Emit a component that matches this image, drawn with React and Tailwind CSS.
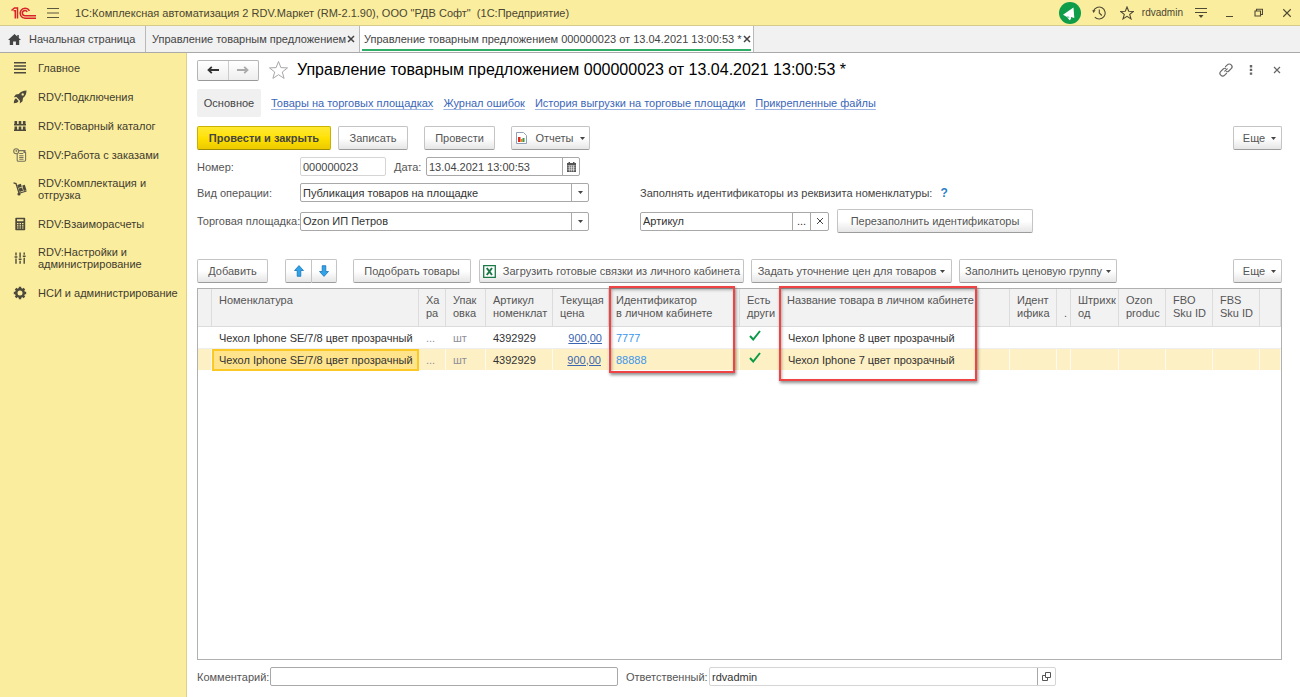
import { clsx } from "clsx";

const MENU = [
  { icon: "main", label: "Главное" },
  { icon: "rocket", label: "RDV:Подключения" },
  { icon: "grid", label: "RDV:Товарный каталог" },
  { icon: "orders", label: "RDV:Работа с заказами" },
  { icon: "cart", label: "RDV:Комплектация и отгрузка", tall: true },
  { icon: "calc", label: "RDV:Взаиморасчеты" },
  { icon: "sliders", label: "RDV:Настройки и администрирование", tall: true },
  { icon: "gear", label: "НСИ и администрирование" },
];

const LINKS = [
  "Товары на торговых площадках",
  "Журнал ошибок",
  "История выгрузки на торговые площадки",
  "Прикрепленные файлы",
];

// the product name column has no width and takes the rest of the table
const COLUMNS = [
  { key: "mark", lines: [], width: "w-[14px]" },
  { key: "item", lines: ["Номенклатура"], width: "w-[207px]" },
  { key: "feature", lines: ["Ха", "ра"], width: "w-[27px]" },
  { key: "pack", lines: ["Упак", "овка"], width: "w-[40px]" },
  { key: "sku", lines: ["Артикул", "номенклат"], width: "w-[67px]" },
  { key: "price", lines: ["Текущая", "цена"], width: "w-[56px]" },
  { key: "extId", lines: ["Идентификатор", "в личном кабинете"], width: "w-[131px]", frame: "h-[87px] left-0 right-1" },
  { key: "other", lines: ["Есть", "други"], width: "w-[41px]" },
  { key: "extName", lines: ["Название товара в личном кабинете"], width: "", frame: "h-[95px] -left-0.5 -right-0.5" },
  { key: "gap", lines: [], width: "w-[34px]" },
  { key: "ident", lines: ["Идент", "ифика"], width: "w-[47px]" },
  { key: "dot", lines: ["\u00a0", "."], width: "w-[14px]" },
  { key: "barcode", lines: ["Штрихк", "од"], width: "w-[48px]" },
  { key: "ozon", lines: ["Ozon", "produc"], width: "w-[47px]" },
  { key: "fbo", lines: ["FBO", "Sku ID"], width: "w-[47px]" },
  { key: "fbs", lines: ["FBS", "Sku ID"], width: "w-[47px]" },
  { key: "tail", lines: [], width: "w-[21px]" },
];

const ROWS = [
  { item: "Чехол Iphone SE/7/8 цвет прозрачный", feature: "...", pack: "шт", sku: "4392929", price: "900,00", extId: "7777", extName: "Чехол Iphone 8 цвет прозрачный" },
  { item: "Чехол Iphone SE/7/8 цвет прозрачный", feature: "...", pack: "шт", sku: "4392929", price: "900,00", extId: "88888", extName: "Чехол Iphone 7 цвет прозрачный", selected: true },
];

function MenuIcon({ name }) {
  return (
    <svg width="14" height="14" viewBox="0 0 14 14" fill="#4d4a3c" stroke="none" className="shrink-0" aria-hidden="true">
      {name === "main" && <path d="M1 1h12v1.500H1zM1 4.300h12v1.500H1zM1 7.600h12v1.500H1zM1 10.900h12v1.500H1z" />}
      {name === "rocket" && (
        <path fillRule="evenodd" d="M13.5.5C10 .6 7.600 1.700 5.800 4L2.800 4.500.8 7.300l2.700-.2L7 10.700l-.2 2.800 2.700-2.200.5-3.200c2.500-1.900 3.500-4.200 3.500-7.600zM9.700 3.200a1.200 1.200 0 1 1 0 2.400 1.200 1.200 0 0 1 0-2.400zM3 8.300C1.600 9 1 10.500.8 13.200c2.500-.2 4-.8 4.700-2.300z" />
      )}
      {name === "grid" && (
        <path d="M1.500 2h2.600v3H1.500zM5.700 2h2.600v3H5.700zM9.900 2h2.600v3H9.900zM1.500 7.500h2.600v3H1.500zM5.700 7.500h2.600v3H5.700zM9.900 7.500h2.600v3H9.900zM1 5h12v1.500H1zM1 10.500h12V12H1z" />
      )}
      {name === "orders" && (
        <g fill="none" stroke="#77735c" strokeWidth="1.100">
          <circle cx="3.200" cy="3.200" r="2.500" />
          <path d="M3.200 1.800v1.500h1M6 2.600h6v2M4.200 6v6.200c0 .7.400 1 1 1h6.200c.8 0 1.200-.5 1.200-1.200V4.500H11V3M6.200 5.500h4M6.200 7.700h4.300M6.200 9.500h4.300M6.200 11.300h4.300" />
        </g>
      )}
      {name === "cart" && (
        <g>
          <path d="M.5.800 3 1.500l3 9.500M5.500 11.500 13.500 9" fill="none" stroke="#4d4a3c" strokeWidth="1.300" />
          <path d="m4.300 3 3.600-1.200.9 3-3.600 1.100zM5.500 6.500l3.600-1.100 1 3.400-3.500 1.100zM9.300 3.500l2.500-.8 1.700 5.500-2.800.9z" />
          <circle cx="6" cy="12" r="1.600" />
        </g>
      )}
      {name === "calc" && (
        <path fillRule="evenodd" d="M3 .800h8.500c.4 0 .7.300.7.700v11c0 .4-.3.700-.7.700H3c-.4 0-.7-.3-.7-.7v-11c0-.4.300-.7.700-.7zM4 2.300v2h6.500v-2zM4 6v1.200h1.500V6zM6.500 6v1.200H8V6zM9 6v1.200h1.500V6zM4 8.200v1.200h1.500V8.200zM6.500 8.200v1.200H8V8.200zM9 8.200v1.200h1.500V8.200zM4 10.400v1.200h1.500v-1.200zM6.500 10.400v1.200H8v-1.200zM9 10.400v1.200h1.500v-1.200z" />
      )}
      {name === "sliders" && (
        <path d="M2.300 1.500h1.400v3H2.300zM1.600 5.200h2.800v1.600H1.600zM2.300 7.500h1.400v5.300H2.300zM6.400 1.500h1.400v5.300H6.400zM5.700 7.500h2.800v1.600H5.700zM6.400 9.800h1.400v3H6.400zM10.500 1.500h1.400v2.300h-1.400zM9.800 4.500h2.800v1.600H9.800zM10.500 6.800h1.400v6h-1.400z" />
      )}
      {name === "gear" && (
        <g>
          <circle cx="7" cy="7" r="3.700" fill="none" stroke="#4d4a3c" strokeWidth="2.600" />
          <path d="M7 .800v12.400M.8 7h12.400M2.600 2.600l8.800 8.800M11.400 2.600l-8.800 8.800" stroke="#4d4a3c" strokeWidth="2.400" fill="none" />
          <circle cx="7" cy="7" r="2.500" fill="#fbed9e" />
        </g>
      )}
    </svg>
  );
}

function Caret() {
  return (
    <svg width="5" height="3" viewBox="0 0 5 3" fill="#444" className="shrink-0" aria-hidden="true">
      <path d="M0 0h5L2.500 3z" />
    </svg>
  );
}

function Cross({ size = 8, color = "#444", weight = 1.5 }) {
  return (
    <svg width={size} height={size} viewBox="0 0 8 8" fill="none" stroke={color} strokeWidth={weight} aria-hidden="true">
      <path d="m1 1 6 6M7 1 1 7" />
    </svg>
  );
}

function Btn({ primary, className, children, ...rest }) {
  return (
    <button
      type="button"
      className={clsx(
        "flex h-6 shrink-0 items-center justify-center whitespace-nowrap rounded-[2px] border bg-linear-to-b",
        primary
          ? "border-[#c9b100] border-b-[#a08c00] from-[#ffe92e] via-[#ffe100] to-[#ecca00] font-bold text-[#444]"
          : "border-[#c4c4c4] border-b-[#9c9c9c] from-white via-white to-[#e6e6e6] text-[#555]",
        className
      )}
      {...rest}
    >
      {children}
    </button>
  );
}

function Select({ id, value }) {
  return (
    <div className="relative flex h-[19px] w-[289px] rounded-[2px] border border-[#a8a8a8] bg-white">
      <select id={id} defaultValue={value} className="w-full appearance-none bg-transparent pl-0.5 pr-5 text-[#333] outline-none">
        <option>{value}</option>
      </select>
      <span className="pointer-events-none absolute inset-y-0 right-0 flex w-[17px] items-center justify-center border-l border-[#a8a8a8]">
        <Caret />
      </span>
    </div>
  );
}

function TitleBar() {
  return (
    <header className="flex h-[26px] items-center border-b border-[#d6ca8a] bg-[#fbed9e] pl-[11px] pr-2">
      <svg width="26" height="14" viewBox="0 0 26 14" fill="none" stroke="#d8232a" strokeWidth="1.500" aria-label="1С">
        <path d="M.5 4.500 3.500 2h3v10.500M4.300 12.500V4.700H2.500" />
        <path d="M18.500 4.800A5 5 0 1 0 14 12.200h11M16.200 5.800a2.600 2.600 0 1 0-2 3.900H25" />
      </svg>
      <button type="button" aria-label="Меню" className="ml-[9px]">
        <svg width="14" height="12" viewBox="0 0 14 12" stroke="#5c573f" strokeWidth="1.200" aria-hidden="true">
          <path d="M1 1.500h12M1 6h12M1 10.500h12" />
        </svg>
      </button>
      <span className="ml-[15px] whitespace-pre text-[#4a4631]">
        {'1С:Комплексная автоматизация 2 RDV.Маркет (RM-2.1.90), ООО "РДВ Софт"  (1С:Предприятие)'}
      </span>
      <div className="ml-auto flex items-center text-[#4a4631]">
        <button type="button" aria-label="Уведомления">
          <svg width="22" height="22" viewBox="0 0 22 22" aria-hidden="true">
            <circle cx="11" cy="11" r="11" fill="#0f9d4a" />
            <path d="M4 12.700 14.500 5.500l.8 10.500-3.300-.9c.3 1.500-.2 2.700-1.500 3.200L8 15z" fill="#fff" />
            <path d="m8.300 14.800 1.900.600" stroke="#0f9d4a" strokeWidth=".8" />
          </svg>
        </button>
        <button type="button" aria-label="История" className="ml-[11px]">
          <svg width="14" height="14" viewBox="0 0 14 14" fill="none" stroke="#4f4a35" strokeWidth="1.100" aria-hidden="true">
            <path d="M1.500 5A6 6 0 1 1 2.800 11.200M7.300 3.500V7l2.500 2.500" />
            <path d="M.2 4.200h3.400L1.600 7z" fill="#4f4a35" stroke="none" />
          </svg>
        </button>
        <button type="button" aria-label="Избранное" className="ml-[14px]">
          <svg width="14" height="14" viewBox="0 0 14 14" fill="none" stroke="#4f4a35" strokeWidth="1.100" aria-hidden="true">
            <path d="m7 1 1.700 4.300 4.600.200-3.600 2.900 1.300 4.500L7 10.400l-4 2.500 1.300-4.500L.7 5.500l4.600-.2z" />
          </svg>
        </button>
        <span className="ml-2 text-[10px]">rdvadmin</span>
        <button type="button" aria-label="Настройки" className="ml-[11px]">
          <svg width="14" height="13" viewBox="0 0 14 13" fill="none" stroke="#4f4a35" strokeWidth="1.200" aria-hidden="true">
            <path d="M1 2.500h12M1 6.500h12" />
            <path d="M4.500 9h5L7 12z" fill="#4f4a35" stroke="none" />
          </svg>
        </button>
        <button type="button" aria-label="Свернуть" className="ml-[17px]">
          <svg width="10" height="10" viewBox="0 0 10 10" stroke="#4f4a35" strokeWidth="1" aria-hidden="true">
            <path d="M1 8.500h7" />
          </svg>
        </button>
        <button type="button" aria-label="Развернуть" className="ml-[19px]">
          <svg width="9" height="9" viewBox="0 0 9 9" fill="none" stroke="#4f4a35" strokeWidth="1.100" aria-hidden="true">
            <path d="M1 3h5.500v5H1zM2.500 3V1.200h6v5.300h-2" />
          </svg>
        </button>
        <button type="button" aria-label="Закрыть" className="ml-[19px]">
          <Cross size={10} color="#4f4a35" weight={0.9} />
        </button>
      </div>
    </header>
  );
}

function PageTabs() {
  return (
    <nav className="flex h-[27px] border-b border-[#a9a9a9] bg-[#f1f1f1] text-[#444]">
      <a href="#home" className="flex w-[146px] items-center border-r border-[#b9b9b9] pl-2">
        <svg width="13" height="11" viewBox="0 0 13 11" fill="#444" className="shrink-0" aria-hidden="true">
          <path d="M6.500 0 0 6h1.800v5h3.300V7.500h2.800V11h3.300V6H13L10.800 4V1H9.300v1.600z" />
        </svg>
        <span className="ml-2 whitespace-nowrap">Начальная страница</span>
      </a>
      <div className="flex w-[214px] items-center border-r border-[#b9b9b9] pl-1.5">
        <a href="#list" className="whitespace-nowrap">Управление товарным предложением</a>
        <button type="button" aria-label="Закрыть вкладку" className="ml-auto mr-1"><Cross /></button>
      </div>
      <div className="flex w-[394px] border-r border-[#b9b9b9] bg-white px-0.5">
        <div className="flex h-[25px] flex-1 items-center border-b-2 border-[#2fac66] pl-0.5 pt-0.5">
          <a href="#doc" className="whitespace-nowrap">Управление товарным предложением 000000023 от 13.04.2021 13:00:53 *</a>
          <button type="button" aria-label="Закрыть вкладку" className="ml-auto"><Cross /></button>
        </div>
      </div>
    </nav>
  );
}

function Sidebar() {
  return (
    <aside className="w-[187px] shrink-0 border-r border-[#ddd08c] bg-[#fbed9e]">
      {MENU.map((m) => (
        <a
          key={m.label}
          href="#menu"
          className={clsx("flex items-center pl-[13px] pr-2 leading-3 text-[#3f3c2e]", m.tall ? "h-10" : "h-[29px]")}
        >
          <MenuIcon name={m.icon} />
          <span className="ml-[11px]">{m.label}</span>
        </a>
      ))}
    </aside>
  );
}

function DocHeader() {
  return (
    <div className="flex h-[22px] items-center">
      <div className="flex h-[21px] w-[62px] rounded-[2px] border border-[#b5b5b5] border-b-[#999] bg-linear-to-b from-white to-[#eee]">
        <button type="button" aria-label="Назад" className="flex flex-1 items-center justify-center border-r border-[#ccc]">
          <svg width="12" height="8" viewBox="0 0 12 8" fill="none" stroke="#333" strokeWidth="1.800" aria-hidden="true">
            <path d="M12 4H1.500M4.800.8 1.500 4l3.300 3.200" />
          </svg>
        </button>
        <button type="button" aria-label="Вперед" className="flex flex-1 items-center justify-center">
          <svg width="12" height="8" viewBox="0 0 12 8" fill="none" stroke="#aaa" strokeWidth="1.800" aria-hidden="true">
            <path d="M0 4h10.500M7.200.8 10.500 4 7.200 7.200" />
          </svg>
        </button>
      </div>
      <button type="button" aria-label="В избранное" className="ml-[9px]">
        <svg width="21" height="20" viewBox="0 0 21 20" fill="none" stroke="#a8a8a8" strokeWidth="1" aria-hidden="true">
          <path d="m10.500 1.500 2.400 6.100 6.600.3-5.200 4.100 1.800 6.400-5.600-3.700-5.600 3.700L6.700 12 1.500 7.900l6.600-.3z" />
        </svg>
      </button>
      <h1 className="ml-2 whitespace-nowrap text-base text-black">
        Управление товарным предложением 000000023 от 13.04.2021 13:00:53 *
      </h1>
      <div className="ml-auto flex items-center">
        <button type="button" aria-label="Ссылка">
          <svg width="14" height="14" viewBox="0 0 14 14" fill="none" stroke="#6b6b6b" strokeWidth="1.200" strokeLinecap="round" aria-hidden="true">
            <path d="M6.500 3.600 8.300 1.800a2.700 2.700 0 0 1 3.900 3.900L9.800 8a2.500 2.500 0 0 1-2.300.7M7.500 10.400l-1.800 1.800a2.700 2.700 0 0 1-3.900-3.900L4.200 6a2.500 2.500 0 0 1 2.300-.7M5.800 8.200l2.400-2.400" />
          </svg>
        </button>
        <button type="button" aria-label="Действия" className="ml-4">
          <svg width="4" height="10" viewBox="0 0 4 10" fill="#666" aria-hidden="true">
            <path d="M.8 0h2.400v2.400H.8zM.8 3.700h2.400v2.400H.8zM.8 7.400h2.400v2.400H.8z" />
          </svg>
        </button>
        <button type="button" aria-label="Закрыть" className="ml-5 mr-px">
          <Cross color="#666" weight={1.2} />
        </button>
      </div>
    </div>
  );
}

function Fields() {
  return (
    <div className="mt-[7px] text-[#555]">
      <div className="flex h-[19px] items-center">
        <label htmlFor="number" className="w-[103px]">Номер:</label>
        <input id="number" defaultValue="000000023" className="h-[19px] w-[86px] rounded-[2px] border border-[#d5d5d5] px-0.5 text-[#444] outline-none" />
        <label htmlFor="date" className="ml-2 w-8">Дата:</label>
        <div className="flex h-[19px] w-[154px] rounded-[2px] border border-[#a8a8a8]">
          <input id="date" defaultValue="13.04.2021 13:00:53" className="w-0 flex-1 px-0.5 text-[#444] outline-none" />
          <button type="button" aria-label="Календарь" className="flex w-[17px] items-center justify-center border-l border-[#a8a8a8]">
            <svg width="9" height="10" viewBox="0 0 9 10" aria-hidden="true">
              <path d="M0 1h9v9H0zM1.500 0h1.500v2H1.500zM6 0h1.500v2H6z" fill="#555" />
              <path d="M.5 3.800h8M.5 5.800h8M.5 7.800h8M2.700 3.500v6M4.600 3.500v6M6.500 3.500v6" stroke="#eee" strokeWidth=".7" />
            </svg>
          </button>
        </div>
      </div>
      <div className="mt-[7px] flex h-[19px] items-center">
        <label htmlFor="operation" className="w-[103px]">Вид операции:</label>
        <Select id="operation" value="Публикация товаров на площадке" />
        <label htmlFor="attribute" className="ml-[51px] whitespace-nowrap text-[#444]">
          Заполнять идентификаторы из реквизита номенклатуры:
        </label>
        <button type="button" className="ml-2 text-xs font-bold text-[#2a7fc9]">?</button>
      </div>
      <div className="mt-[7px] flex h-6 items-center">
        <label htmlFor="market" className="w-[103px] whitespace-nowrap">Торговая площадка:</label>
        <Select id="market" value="Ozon ИП Петров" />
        <div className="ml-[51px] flex h-[19px] w-[189px] rounded-[2px] border border-[#a8a8a8]">
          <input id="attribute" defaultValue="Артикул" className="w-0 flex-1 px-0.5 text-[#333] outline-none" />
          <button type="button" className="w-[18px] border-l border-[#a8a8a8] text-[#333]">...</button>
          <button type="button" aria-label="Очистить" className="flex w-[18px] items-center justify-center border-l border-[#a8a8a8]">
            <Cross weight={1} />
          </button>
        </div>
        <Btn className="ml-2 w-[196px]">Перезаполнить идентификаторы</Btn>
      </div>
    </div>
  );
}

function Arrow({ down }) {
  return (
    <svg width="10" height="12" viewBox="0 0 10 12" fill="#2fa4ea" stroke="#1c75b5" strokeWidth=".8" className={clsx(down && "rotate-180")} aria-hidden="true">
      <path d="M5 .600 9.500 5.500H6.800v5.800H3.200V5.500H.5z" />
    </svg>
  );
}

function TableToolbar() {
  return (
    <div className="mt-[26px] flex items-center">
      <Btn className="w-[71px]">Добавить</Btn>
      <div className="ml-[17px] flex">
        <Btn aria-label="Вверх" className="w-[27px] rounded-r-none"><Arrow /></Btn>
        <Btn aria-label="Вниз" className="w-[25px] rounded-l-none border-l-0"><Arrow down /></Btn>
      </div>
      <Btn className="ml-4 w-[118px]">Подобрать товары</Btn>
      <Btn className="ml-2 w-[265px] gap-[7px]">
        <svg width="13" height="13" viewBox="0 0 13 13" fill="#fff" stroke="#1c7a47" aria-hidden="true">
          <path d="M.7.700h11.600v11.600H.7z" strokeWidth="1.300" />
          <path d="m3.800 3 5.200 7M9 3l-5.200 7" strokeWidth="2" />
        </svg>
        Загрузить готовые связки из личного кабинета
      </Btn>
      <Btn className="ml-[7px] w-[201px] gap-1">Задать уточнение цен для товаров <Caret /></Btn>
      <Btn className="ml-[7px] w-[158px] gap-1">Заполнить ценовую группу <Caret /></Btn>
      <Btn className="ml-auto w-[49px] gap-1.5 pl-1">Еще <Caret /></Btn>
    </div>
  );
}

function Cell({ col, row }) {
  const base = clsx("h-[22px] whitespace-nowrap border-b", row.selected ? "border-r border-b-white border-r-[#fffaf0] bg-[#fdf0c4]" : "border-b-[#eee]");
  if (col.key === "item") {
    return (
      <td className={clsx(base, "px-[7px] text-[#333]", row.selected && "bg-[#ffe48c] outline-2 -outline-offset-2 outline-[#fbc926]")}>
        {row.item}
      </td>
    );
  }
  if (col.key === "price") {
    return <td className={clsx(base, "pr-[7px] text-right")}><a href="#price" className="text-[#3a66b0] underline">{row.price}</a></td>;
  }
  if (col.key === "other") {
    return (
      <td className={clsx(base, "pb-1 pl-[9px]")}>
        <svg width="12" height="11" viewBox="0 0 12 11" fill="none" stroke="#0b9a48" strokeWidth="2" aria-label="Да">
          <path d="m1 6 3.200 3.500L11 1" />
        </svg>
      </td>
    );
  }
  return (
    <td
      className={clsx(
        base,
        "pl-[7px]",
        col.key === "extId" ? "text-[#3b96ec]" : col.key === "feature" || col.key === "pack" ? "text-[#8f8f98]" : "text-[#333]"
      )}
    >
      {row[col.key]}
    </td>
  );
}

function GoodsTable() {
  return (
    <div className="mt-[5px] flex-1 border border-[#b0b0b0] bg-white">
      <table className="w-full table-fixed border-separate border-spacing-0">
        <thead>
          <tr>
            {COLUMNS.map((c) => (
              <th
                key={c.key}
                className={clsx("relative h-[38px] border-b border-r border-[#dcdcdc] bg-[#f2f2f2] pt-[5px] text-left align-top font-normal leading-[13px] text-[#555]", c.width, c.key === "extName" ? "pl-1.5" : "pl-[7px]")}
              >
                {c.lines.map((l) => <span key={l} className="block whitespace-nowrap">{l}</span>)}
                {/* red frame over the whole column */}
                {c.frame && (
                  <span className={clsx("pointer-events-none absolute -top-[3px] z-10 border-2 border-[#f04444] shadow-[1px_2px_3px_rgba(0,0,0,0.45),inset_1px_2px_3px_rgba(0,0,0,0.3)]", c.frame)} />
                )}
              </th>
            ))}
          </tr>
        </thead>
        <tbody>
          {ROWS.map((r) => (
            <tr key={r.extId}>
              {COLUMNS.map((c) => <Cell key={c.key} col={c} row={r} />)}
            </tr>
          ))}
        </tbody>
      </table>
    </div>
  );
}

function Footer() {
  return (
    <div className="mt-[7px] flex h-[19px] items-center text-[#555]">
      <label htmlFor="comment" className="w-[73px]">Комментарий:</label>
      <input id="comment" className="h-[19px] w-[348px] rounded-[2px] border border-[#a8a8a8] px-0.5 outline-none" />
      <label htmlFor="owner" className="ml-2 w-[83px]">Ответственный:</label>
      <div className="flex h-[19px] w-[347px] rounded-[2px] border border-[#d5d5d5]">
        <input id="owner" defaultValue="rdvadmin" className="w-0 flex-1 px-0.5 text-[#333] outline-none" />
        <button type="button" aria-label="Открыть" className="flex w-[18px] items-center justify-center border-l border-[#a8a8a8]">
          <svg width="9" height="9" viewBox="0 0 9 9" fill="none" stroke="#555" strokeWidth="1" aria-hidden="true">
            <path d="M3.500.500h5v5h-5zM3.500 3.500h-3v5h5v-3" />
          </svg>
        </button>
      </div>
    </div>
  );
}

export default function App() {
  return (
    <div className="flex min-h-screen flex-col bg-white font-['Liberation_Sans',Arial,sans-serif] text-[11px] leading-[14px]">
      <TitleBar />
      <PageTabs />
      <div className="flex flex-1">
        <Sidebar />
        <main className="flex min-w-0 flex-1 flex-col pb-[11px] pl-2.5 pr-[18px] pt-1.5">
          <DocHeader />
          <nav className="mt-2 flex h-7 items-center">
            <span className="flex h-7 w-16 items-center justify-center rounded-[2px] bg-[#f0f0f0] text-[#444]">Основное</span>
            <div className="ml-2.5 flex gap-2.5">
              {LINKS.map((l) => (
                <a key={l} href="#section" className="whitespace-nowrap text-[#3a66b8] underline decoration-[#9db5e0] underline-offset-2">{l}</a>
              ))}
            </div>
          </nav>
          <div className="mt-[9px] flex items-center">
            <Btn primary className="w-[134px]">Провести и закрыть</Btn>
            <Btn className="ml-[7px] w-[70px]">Записать</Btn>
            <Btn className="ml-4 w-[71px]">Провести</Btn>
            <Btn className="ml-4 w-[79px]">
              <svg width="11" height="12" viewBox="0 0 11 12" aria-hidden="true">
                <path d="M.5.500h7l3 3v8H.5z" fill="#fff" stroke="#8fa0b5" />
                <path d="M2 5h2.500v5H2z" fill="#e02b20" />
                <path d="M4.500 7h2v3h-2z" fill="#e8892b" />
                <path d="M6.500 6h2v4h-2z" fill="#3b9b45" />
              </svg>
              <span className="ml-2 mr-1.5">Отчеты</span>
              <Caret />
            </Btn>
            <Btn className="ml-auto w-[49px] gap-1.5 pl-1">Еще <Caret /></Btn>
          </div>
          <Fields />
          <TableToolbar />
          <GoodsTable />
          <Footer />
        </main>
      </div>
    </div>
  );
}
